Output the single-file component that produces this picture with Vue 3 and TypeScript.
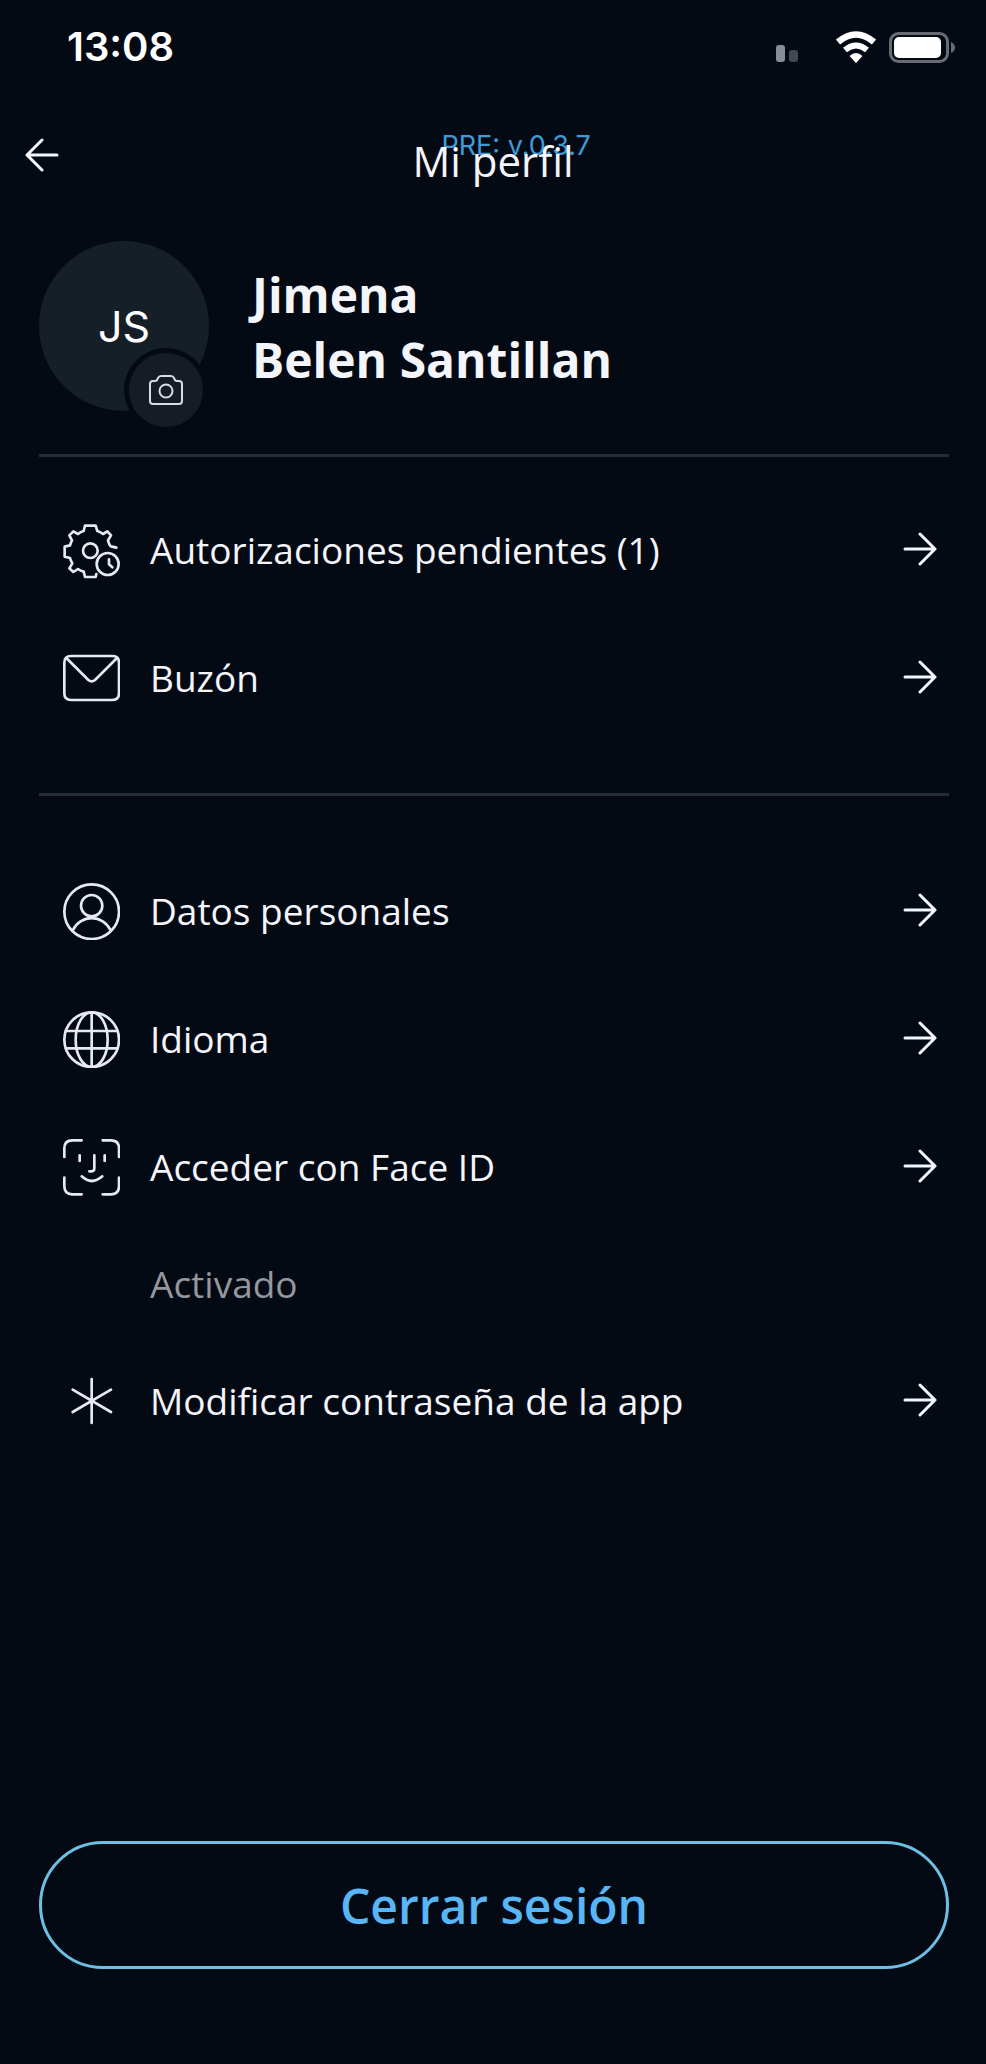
<script setup lang="ts">
interface MenuItem {
  id: string
  label: string
  note?: string
}

const sections: MenuItem[][] = [
  [
    { id: 'pending', label: 'Autorizaciones pendientes (1)' },
    { id: 'mail', label: 'Buzón' },
  ],
  [
    { id: 'user', label: 'Datos personales' },
    { id: 'globe', label: 'Idioma' },
    { id: 'face', label: 'Acceder con Face ID', note: 'Activado' },
    { id: 'asterisk', label: 'Modificar contraseña de la app' },
  ],
]

// Stroke outlines on a 171-unit grid
const icons: Record<string, string[]> = {
  pending: [
    'M160 77L144 73Q139 71 135 55L144 40L133 28L120 36Q111 29 103 27L98 11H66L62 27Q53 29 45 36L31 28L19 40L27 55Q23 62 21 70L5 74V104L21 108Q23 116 28 124L19 139L31 150L45 141Q53 147 62 149L66 165H98L100 156',
    'M60 86a22 22 0 1 0 44 0a22 22 0 1 0 -44 0',
    'M101 126a33 33 0 1 0 66 0a33 33 0 1 0 -66 0',
    'M138 112V127L148 136',
  ],
  mail: [
    'M24 18H148Q168 18 168 38V130Q168 150 148 150H24Q4 150 4 130V38Q4 18 24 18Z',
    'M10 24L76 90Q86 98 96 90L162 24',
  ],
  user: [
    'M4 86a82 82 0 1 0 164 0a82 82 0 1 0 -164 0',
    'M54 68a32 32 0 1 0 64 0a32 32 0 1 0 -64 0',
    'M30 141A62 62 0 0 1 142 141',
  ],
  globe: [
    'M4 86a82 82 0 1 0 164 0a82 82 0 1 0 -164 0',
    'M38 86a48 82 0 1 0 96 0a48 82 0 1 0 -96 0',
    'M86 4V168M8 60H164M8 112H164',
  ],
  face: [
    'M4 54V28Q4 4 28 4H56M119 4H144Q168 4 168 28V54M168 116V142Q168 166 144 166H119M56 166H28Q4 166 4 142V116',
    'M50 49V66M125 49V66M94 49V88Q94 97 86 97H79M56 112Q86 140 118 112',
  ],
  asterisk: ['M86 18V150M29 50L144 117M144 50L29 117'],
}
</script>

<template>
  <div class="screen">
    <div class="status">
      <time class="clock">13:08</time>
      <svg class="indicators" viewBox="0 0 180 34" aria-hidden="true">
        <rect x="0" y="15" width="9" height="17" rx="3" fill="#8b8d95" />
        <rect x="13" y="20" width="9" height="12" rx="3" fill="#45484f" />
        <g fill="none" stroke="#fff" stroke-width="6.5">
          <path d="M62 12Q80 -3 98 12" />
          <path d="M69 20Q80 11 91 20" stroke-width="6" />
        </g>
        <path d="M73.500 26Q80 20 86.500 26L80 33Z" fill="#fff" />
        <rect x="114.500" y="3.500" width="57" height="28" rx="8" fill="none" stroke="#686b73" stroke-width="3" />
        <rect x="118" y="7" width="47" height="21" rx="5" fill="#fff" />
        <path d="M175 12Q179 14 179 17.500Q179 21 175 23Z" fill="#686b73" />
      </svg>
    </div>

    <header class="header">
      <button class="back" type="button" aria-label="Volver">
        <svg viewBox="0 0 34 34"><path d="M32 17H2M17 2L2 17L17 32" /></svg>
      </button>
      <div class="heading">
        <h1>Mi perfil</h1>
        <span class="version">PRE: v.0.3.7</span>
      </div>
    </header>

    <main class="content">
      <section class="profile">
        <div class="avatar">
          <span>JS</span>
          <button class="photo" type="button" aria-label="Cambiar foto">
            <svg viewBox="0 0 36 32">
              <path d="M5 7H7Q9 7 9.500 5L10 4Q11 2 13 2H23Q25 2 26 4L26.500 5Q27 7 29 7H31Q34 7 34 10V27Q34 30 31 30H5Q2 30 2 27V10Q2 7 5 7Z" />
              <circle cx="18" cy="17" r="6.500" />
            </svg>
          </button>
        </div>
        <h2>Jimena<br />Belen Santillan</h2>
      </section>

      <nav v-for="(items, index) in sections" :key="index" class="menu">
        <template v-for="item in items" :key="item.id">
          <button class="row" type="button">
            <svg class="icon" viewBox="0 0 171 171" aria-hidden="true">
              <path v-for="d in icons[item.id]" :key="d" :d="d" />
            </svg>
            <span class="label">{{ item.label }}</span>
            <svg class="arrow" viewBox="0 0 34 36" aria-hidden="true">
              <path d="M2 17H32M17 2L32 17L17 32" />
            </svg>
          </button>
          <p v-if="item.note" class="note">{{ item.note }}</p>
        </template>
      </nav>

      <button class="logout" type="button">Cerrar sesión</button>
    </main>
  </div>
</template>

<style>
body {
  margin: 0;
  background: #030a14;
}
</style>

<style scoped>
.screen {
  box-sizing: border-box;
  min-height: 100vh;
  display: flex;
  flex-direction: column;
  background: #030a14;
  color: #f4f5fb;
  font-family: "Open Sans", "Noto Sans", sans-serif;
}

button {
  padding: 0;
  border: 0;
  background: none;
  color: inherit;
  font: inherit;
  cursor: pointer;
}

svg {
  display: block;
  flex: none;
}

.status {
  height: 94px;
  padding: 0 30px 0 67px;
  display: flex;
  align-items: center;
  justify-content: space-between;
}

.clock {
  color: #fff;
  font: 600 40px/48px Inter, sans-serif;
}

.indicators {
  width: 180px;
  height: 34px;
}

.header {
  height: 122px;
  padding: 0 24px;
  display: grid;
  grid-template-columns: 48px 1fr 48px;
  align-items: center;
}

.back {
  height: 48px;
}

.back svg {
  width: 34px;
  height: 34px;
  margin-left: 1px;
}

.back path,
.arrow path {
  fill: none;
  stroke: #f4f5fb;
  stroke-width: 3;
  stroke-linecap: round;
  stroke-linejoin: round;
}

.heading {
  position: relative;
  justify-self: center;
}

h1 {
  position: relative;
  z-index: 1;
  margin: 0;
  padding-top: 12px;
  font-size: 42px;
  line-height: 56px;
  font-weight: 400;
}

.version {
  position: absolute;
  top: 9px;
  left: 29px;
  color: #3f9bd6;
  font: 400 27px/32px Inter, sans-serif;
  white-space: nowrap;
}

.content {
  flex: 1;
  display: flex;
  flex-direction: column;
  padding: 25px 37px 95px 39px;
}

.profile {
  display: flex;
  align-items: center;
  gap: 43px;
  padding-bottom: 43px;
}

.avatar {
  position: relative;
  width: 170px;
  height: 170px;
  flex: none;
  display: flex;
  align-items: center;
  justify-content: center;
  border-radius: 50%;
  background: #161f28;
  color: #fff;
  font: 400 43px/54px Inter, sans-serif;
}

.photo {
  position: absolute;
  right: 1px;
  bottom: -21px;
  width: 84px;
  height: 84px;
  display: flex;
  align-items: center;
  justify-content: center;
  border: 5px solid #030a14;
  border-radius: 50%;
  background: #151c26;
}

.photo svg {
  width: 36px;
  height: 32px;
  fill: none;
  stroke: #d9dae2;
  stroke-width: 2;
}

h2 {
  margin: 0;
  padding-top: 1px;
  font-size: 48px;
  line-height: 65px;
  font-weight: 700;
}

.menu {
  padding: 29px 12px 51px 24px;
  border-top: 3px solid #262b36;
}

.menu + .menu {
  padding-top: 51px;
}

.row {
  width: 100%;
  height: 128px;
  display: flex;
  align-items: center;
  gap: 30px;
  text-align: left;
}

.label,
.note {
  font-size: 37px;
  line-height: 50px;
}

.label {
  flex: 1;
}

.icon {
  width: 57px;
  height: 57px;
  fill: none;
  stroke: #e8e9f0;
  stroke-width: 8;
  stroke-linejoin: round;
  stroke-linecap: round;
}

.arrow {
  width: 34px;
  height: 36px;
}

.note {
  margin: 0;
  padding: 28px 0 28px 87px;
  color: #96969d;
}

.logout {
  height: 128px;
  margin-top: auto;
  border: 3px solid #6dbfe4;
  border-radius: 64px;
  color: #58b6f6;
  font-size: 48px;
  font-weight: 600;
}
</style>
